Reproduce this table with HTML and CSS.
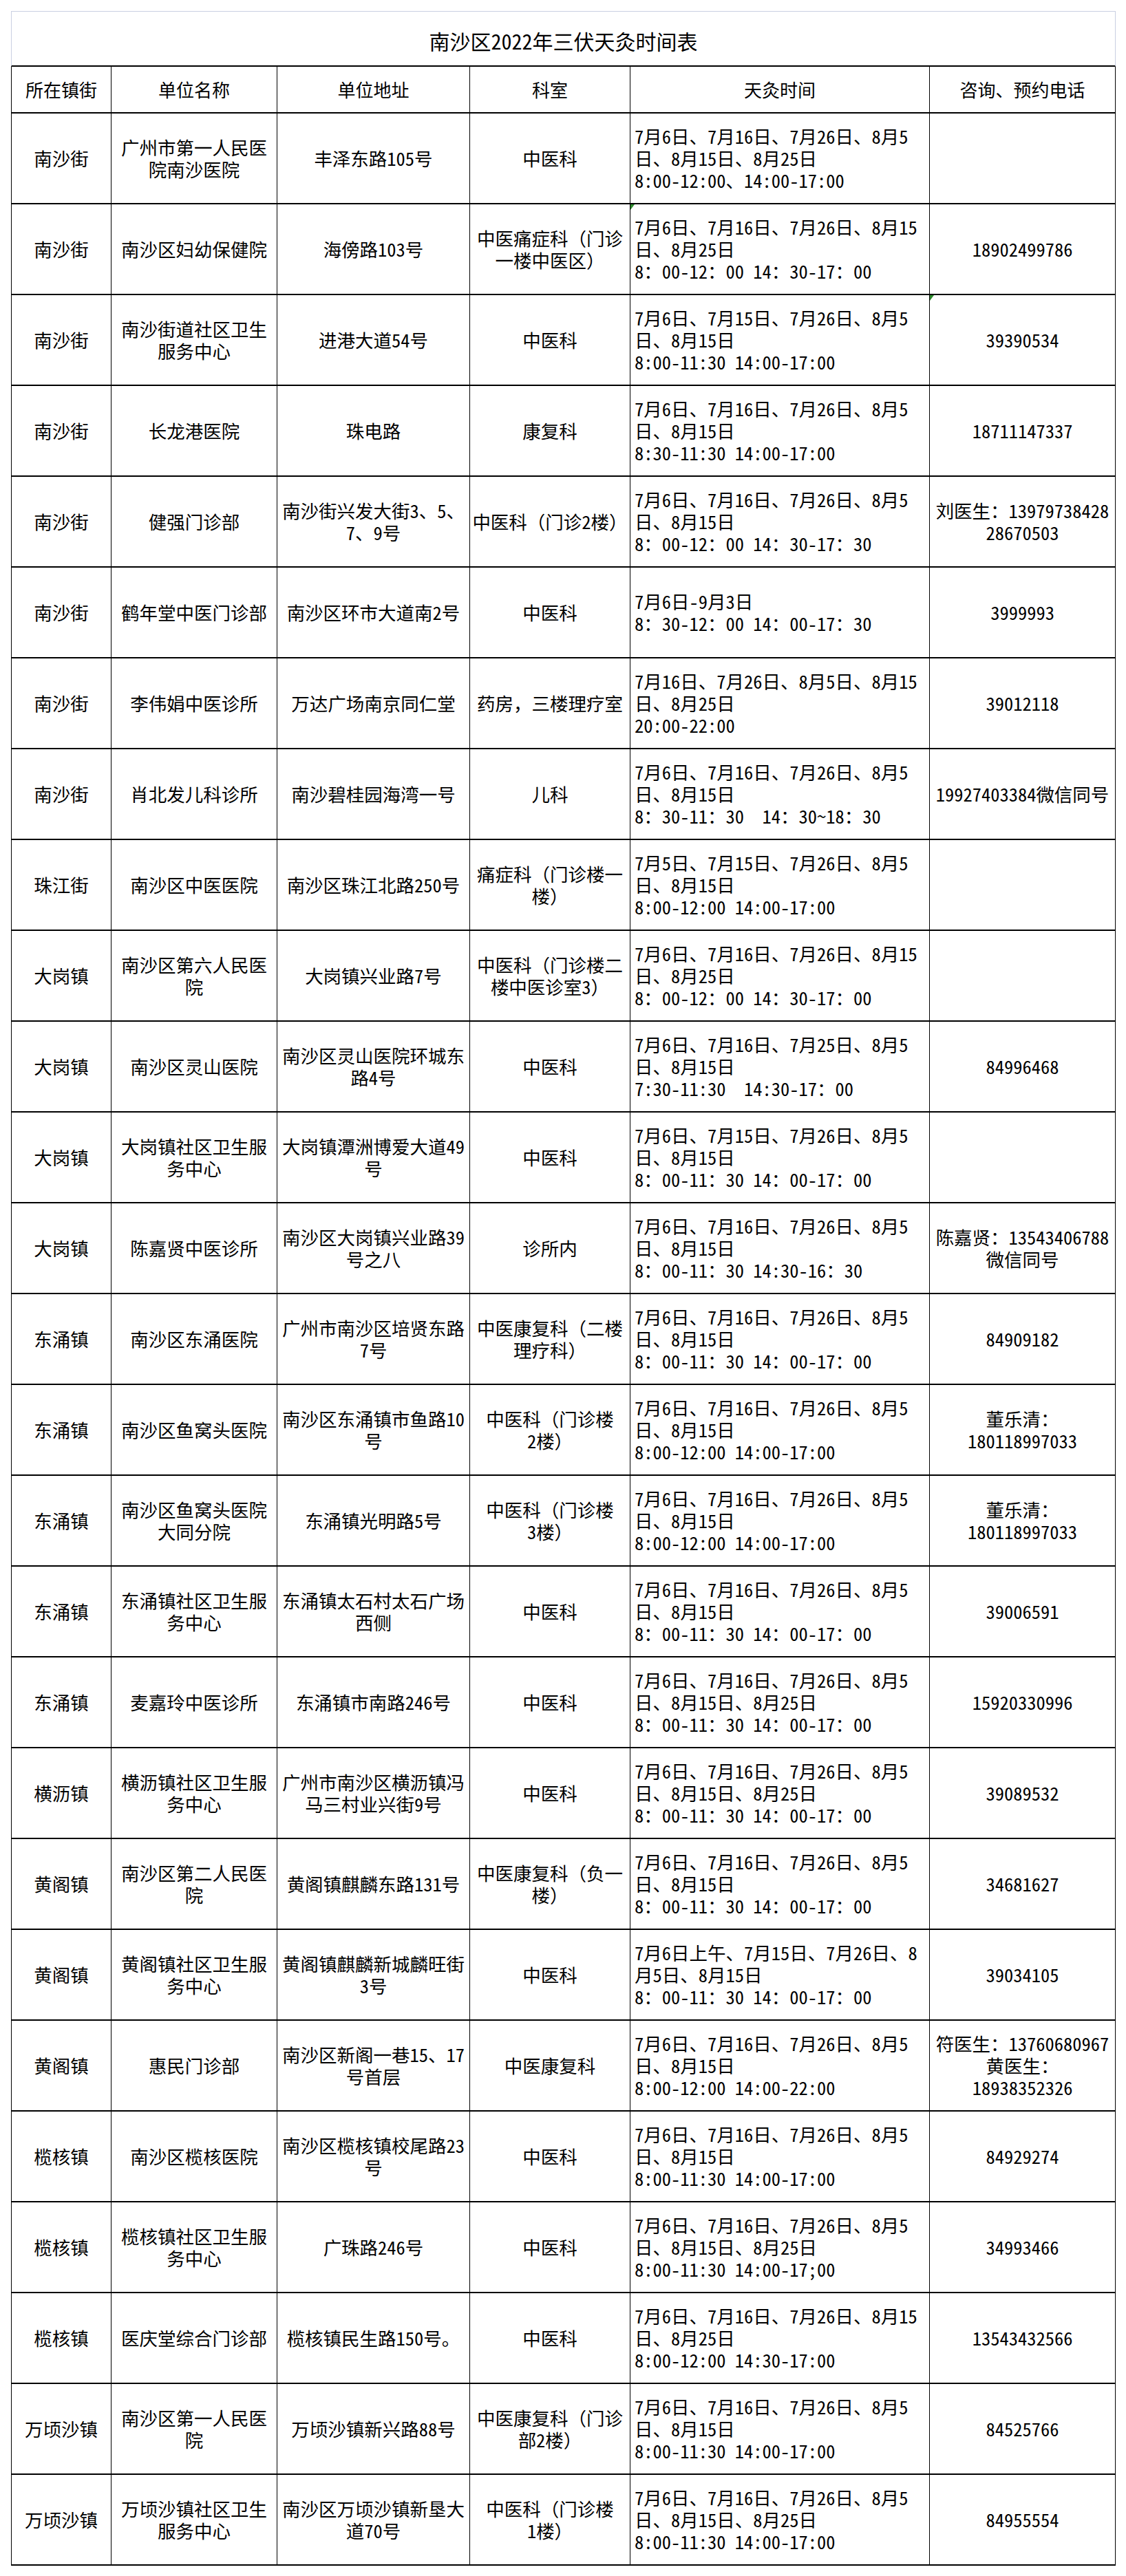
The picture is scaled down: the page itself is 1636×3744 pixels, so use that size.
FILE: index.html
```html
<!DOCTYPE html>
<html lang="zh-CN">
<head>
<meta charset="utf-8">
<title>南沙区2022年三伏天灸时间表</title>
<link rel="stylesheet" href="styles.css">
</head>
<body>
<div class="page">
  <div class="sheet">
    <div class="title">南沙区2022年三伏天灸时间表</div>
    <div class="grid">
      <div class="c h">所在镇街</div>
      <div class="c h">单位名称</div>
      <div class="c h">单位地址</div>
      <div class="c h">科室</div>
      <div class="c h">天灸时间</div>
      <div class="c h">咨询、预约电话</div>

      <div class="c">南沙街</div>
      <div class="c">广州市第一人民医<br>院南沙医院</div>
      <div class="c">丰泽东路105号</div>
      <div class="c">中医科</div>
      <div class="c t">7月6日、7月16日、7月26日、8月5<br>日、8月15日、8月25日<br>8:00-12:00、14:00-17:00</div>
      <div class="c"></div>

      <div class="c">南沙街</div>
      <div class="c">南沙区妇幼保健院</div>
      <div class="c">海傍路103号</div>
      <div class="c">中医痛症科（门诊<br>一楼中医区）</div>
      <div class="c t flag">7月6日、7月16日、7月26日、8月15<br>日、8月25日<br>8：00-12：00 14：30-17：00</div>
      <div class="c">18902499786</div>

      <div class="c">南沙街</div>
      <div class="c">南沙街道社区卫生<br>服务中心</div>
      <div class="c">进港大道54号</div>
      <div class="c">中医科</div>
      <div class="c t">7月6日、7月15日、7月26日、8月5<br>日、8月15日<br>8:00-11:30 14:00-17:00</div>
      <div class="c flag">39390534</div>

      <div class="c">南沙街</div>
      <div class="c">长龙港医院</div>
      <div class="c">珠电路</div>
      <div class="c">康复科</div>
      <div class="c t">7月6日、7月16日、7月26日、8月5<br>日、8月15日<br>8:30-11:30 14:00-17:00</div>
      <div class="c">18711147337</div>

      <div class="c">南沙街</div>
      <div class="c">健强门诊部</div>
      <div class="c">南沙街兴发大街3、5、<br>7、9号</div>
      <div class="c">中医科（门诊2楼）</div>
      <div class="c t">7月6日、7月16日、7月26日、8月5<br>日、8月15日<br>8：00-12：00 14：30-17：30</div>
      <div class="c">刘医生：13979738428<br>28670503</div>

      <div class="c">南沙街</div>
      <div class="c">鹤年堂中医门诊部</div>
      <div class="c">南沙区环市大道南2号</div>
      <div class="c">中医科</div>
      <div class="c t">7月6日-9月3日<br>8：30-12：00 14：00-17：30</div>
      <div class="c">3999993</div>

      <div class="c">南沙街</div>
      <div class="c">李伟娟中医诊所</div>
      <div class="c">万达广场南京同仁堂</div>
      <div class="c">药房，三楼理疗室</div>
      <div class="c t">7月16日、7月26日、8月5日、8月15<br>日、8月25日<br>20:00-22:00</div>
      <div class="c">39012118</div>

      <div class="c">南沙街</div>
      <div class="c">肖北发儿科诊所</div>
      <div class="c">南沙碧桂园海湾一号</div>
      <div class="c">儿科</div>
      <div class="c t">7月6日、7月16日、7月26日、8月5<br>日、8月15日<br>8：30-11：30　14：30~18：30</div>
      <div class="c">19927403384微信同号</div>

      <div class="c">珠江街</div>
      <div class="c">南沙区中医医院</div>
      <div class="c">南沙区珠江北路250号</div>
      <div class="c">痛症科（门诊楼一<br>楼）</div>
      <div class="c t">7月5日、7月15日、7月26日、8月5<br>日、8月15日<br>8:00-12:00 14:00-17:00</div>
      <div class="c"></div>

      <div class="c">大岗镇</div>
      <div class="c">南沙区第六人民医<br>院</div>
      <div class="c">大岗镇兴业路7号</div>
      <div class="c">中医科（门诊楼二<br>楼中医诊室3）</div>
      <div class="c t">7月6日、7月16日、7月26日、8月15<br>日、8月25日<br>8：00-12：00 14：30-17：00</div>
      <div class="c"></div>

      <div class="c">大岗镇</div>
      <div class="c">南沙区灵山医院</div>
      <div class="c">南沙区灵山医院环城东<br>路4号</div>
      <div class="c">中医科</div>
      <div class="c t">7月6日、7月16日、7月25日、8月5<br>日、8月15日<br>7:30-11:30　14:30-17：00</div>
      <div class="c">84996468</div>

      <div class="c">大岗镇</div>
      <div class="c">大岗镇社区卫生服<br>务中心</div>
      <div class="c">大岗镇潭洲博爱大道49<br>号</div>
      <div class="c">中医科</div>
      <div class="c t">7月6日、7月15日、7月26日、8月5<br>日、8月15日<br>8：00-11：30 14：00-17：00</div>
      <div class="c"></div>

      <div class="c">大岗镇</div>
      <div class="c">陈嘉贤中医诊所</div>
      <div class="c">南沙区大岗镇兴业路39<br>号之八</div>
      <div class="c">诊所内</div>
      <div class="c t">7月6日、7月16日、7月26日、8月5<br>日、8月15日<br>8：00-11：30 14:30-16：30</div>
      <div class="c">陈嘉贤：13543406788<br>微信同号</div>

      <div class="c">东涌镇</div>
      <div class="c">南沙区东涌医院</div>
      <div class="c">广州市南沙区培贤东路<br>7号</div>
      <div class="c">中医康复科（二楼<br>理疗科）</div>
      <div class="c t">7月6日、7月16日、7月26日、8月5<br>日、8月15日<br>8：00-11：30 14：00-17：00</div>
      <div class="c">84909182</div>

      <div class="c">东涌镇</div>
      <div class="c">南沙区鱼窝头医院</div>
      <div class="c">南沙区东涌镇市鱼路10<br>号</div>
      <div class="c">中医科（门诊楼<br>2楼）</div>
      <div class="c t">7月6日、7月16日、7月26日、8月5<br>日、8月15日<br>8:00-12:00 14:00-17:00</div>
      <div class="c">董乐清：<br>180118997033</div>

      <div class="c">东涌镇</div>
      <div class="c">南沙区鱼窝头医院<br>大同分院</div>
      <div class="c">东涌镇光明路5号</div>
      <div class="c">中医科（门诊楼<br>3楼）</div>
      <div class="c t">7月6日、7月16日、7月26日、8月5<br>日、8月15日<br>8:00-12:00 14:00-17:00</div>
      <div class="c">董乐清：<br>180118997033</div>

      <div class="c">东涌镇</div>
      <div class="c">东涌镇社区卫生服<br>务中心</div>
      <div class="c">东涌镇太石村太石广场<br>西侧</div>
      <div class="c">中医科</div>
      <div class="c t">7月6日、7月16日、7月26日、8月5<br>日、8月15日<br>8：00-11：30 14：00-17：00</div>
      <div class="c">39006591</div>

      <div class="c">东涌镇</div>
      <div class="c">麦嘉玲中医诊所</div>
      <div class="c">东涌镇市南路246号</div>
      <div class="c">中医科</div>
      <div class="c t">7月6日、7月16日、7月26日、8月5<br>日、8月15日、8月25日<br>8：00-11：30 14：00-17：00</div>
      <div class="c">15920330996</div>

      <div class="c">横沥镇</div>
      <div class="c">横沥镇社区卫生服<br>务中心</div>
      <div class="c">广州市南沙区横沥镇冯<br>马三村业兴街9号</div>
      <div class="c">中医科</div>
      <div class="c t">7月6日、7月16日、7月26日、8月5<br>日、8月15日、8月25日<br>8：00-11：30 14：00-17：00</div>
      <div class="c">39089532</div>

      <div class="c">黄阁镇</div>
      <div class="c">南沙区第二人民医<br>院</div>
      <div class="c">黄阁镇麒麟东路131号</div>
      <div class="c">中医康复科（负一<br>楼）</div>
      <div class="c t">7月6日、7月16日、7月26日、8月5<br>日、8月15日<br>8：00-11：30 14：00-17：00</div>
      <div class="c">34681627</div>

      <div class="c">黄阁镇</div>
      <div class="c">黄阁镇社区卫生服<br>务中心</div>
      <div class="c">黄阁镇麒麟新城麟旺街<br>3号</div>
      <div class="c">中医科</div>
      <div class="c t">7月6日上午、7月15日、7月26日、8<br>月5日、8月15日<br>8：00-11：30 14：00-17：00</div>
      <div class="c">39034105</div>

      <div class="c">黄阁镇</div>
      <div class="c">惠民门诊部</div>
      <div class="c">南沙区新阁一巷15、17<br>号首层</div>
      <div class="c">中医康复科</div>
      <div class="c t">7月6日、7月16日、7月26日、8月5<br>日、8月15日<br>8:00-12:00 14:00-22:00</div>
      <div class="c">符医生：13760680967<br>黄医生：<br>18938352326</div>

      <div class="c">榄核镇</div>
      <div class="c">南沙区榄核医院</div>
      <div class="c">南沙区榄核镇校尾路23<br>号</div>
      <div class="c">中医科</div>
      <div class="c t">7月6日、7月16日、7月26日、8月5<br>日、8月15日<br>8:00-11:30 14:00-17:00</div>
      <div class="c">84929274</div>

      <div class="c">榄核镇</div>
      <div class="c">榄核镇社区卫生服<br>务中心</div>
      <div class="c">广珠路246号</div>
      <div class="c">中医科</div>
      <div class="c t">7月6日、7月16日、7月26日、8月5<br>日、8月15日、8月25日<br>8:00-11:30 14:00-17;00</div>
      <div class="c">34993466</div>

      <div class="c">榄核镇</div>
      <div class="c">医庆堂综合门诊部</div>
      <div class="c">榄核镇民生路150号。</div>
      <div class="c">中医科</div>
      <div class="c t">7月6日、7月16日、7月26日、8月15<br>日、8月25日<br>8:00-12:00 14:30-17:00</div>
      <div class="c">13543432566</div>

      <div class="c">万顷沙镇</div>
      <div class="c">南沙区第一人民医<br>院</div>
      <div class="c">万顷沙镇新兴路88号</div>
      <div class="c">中医康复科（门诊<br>部2楼）</div>
      <div class="c t">7月6日、7月16日、7月26日、8月5<br>日、8月15日<br>8:00-11:30 14:00-17:00</div>
      <div class="c">84525766</div>

      <div class="c">万顷沙镇</div>
      <div class="c">万顷沙镇社区卫生<br>服务中心</div>
      <div class="c">南沙区万顷沙镇新垦大<br>道70号</div>
      <div class="c">中医科（门诊楼<br>1楼）</div>
      <div class="c t">7月6日、7月16日、7月26日、8月5<br>日、8月15日、8月25日<br>8:00-11:30 14:00-17:00</div>
      <div class="c">84955554</div>
    </div>
  </div>
</div>
</body>
</html>
```

FILE: styles.css
```css
html, body {
  margin: 0;
  padding: 0;
  background: #ffffff;
}

.page {
  padding: 16px 0 0 16px;
}

.sheet {
  width: 1605px;
  color: #000000;
  font-family: "Noto Sans Mono CJK SC", "Liberation Serif", "Noto Sans CJK SC", serif;
}

.title {
  box-sizing: border-box;
  height: 81px;
  padding-top: 6px;
  border: 1px solid #c9cfe2;
  border-bottom: 2px solid #000000;
  display: flex;
  align-items: center;
  justify-content: center;
  font-size: 30px;
  line-height: 36px;
  white-space: nowrap;
}

.grid {
  display: grid;
  grid-template-columns: 146px 241px 280px 233px 435px 270px;
  grid-template-rows: 68px;
  grid-auto-rows: 132px;
}

.c {
  position: relative;
  box-sizing: border-box;
  border-right: 1px solid #000000;
  border-bottom: 2px solid #000000;
  display: flex;
  align-items: center;
  justify-content: center;
  text-align: center;
  font-size: 26.5px;
  line-height: 32px;
  white-space: nowrap;
  overflow: visible;
}

.grid > .c:nth-child(6n+1) {
  border-left: 1px solid #000000;
}

.h {
  font-size: 26px;
}

.t {
  justify-content: flex-start;
  text-align: left;
  padding-left: 6px;
}

.flag::before {
  content: "";
  position: absolute;
  top: 0;
  left: 0;
  width: 0;
  height: 0;
  border-top: 8px solid #2d8a2d;
  border-right: 6px solid transparent;
}
```
